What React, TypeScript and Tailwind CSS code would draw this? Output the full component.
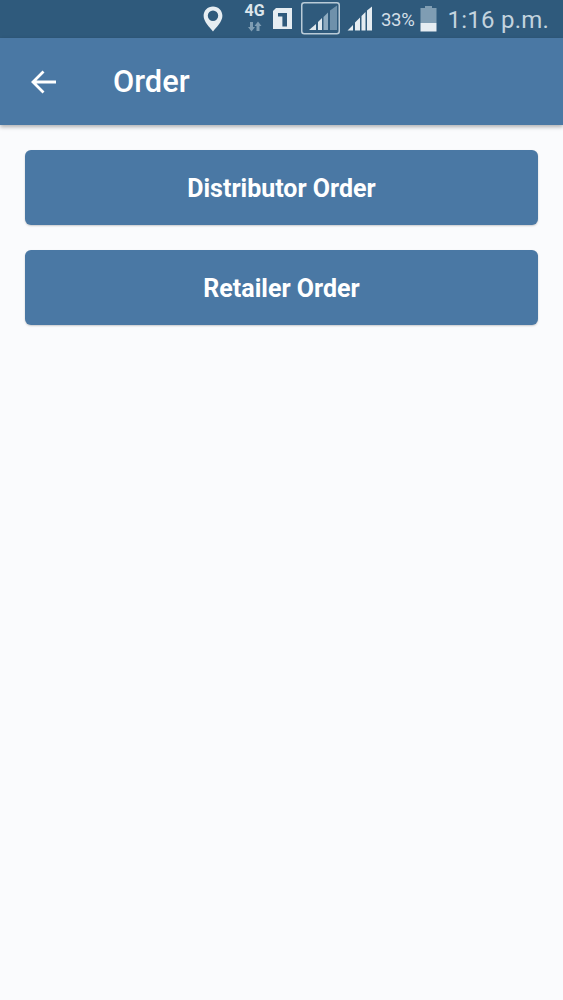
import React from "react";

function StatusIcons() {
  return (
    <>
      <svg width="20" height="26" viewBox="0 0 20 26" className="ml-[203px] mt-[6px] shrink-0">
        <path fillRule="evenodd" fill="#e6edf2" d="M10 0.5C4.6 0.5 0.6 4.6 0.6 9.8 0.6 15.5 6.6 21.5 10 25.5 13.4 21.5 19.4 15.5 19.4 9.8 19.4 4.6 15.4 0.5 10 0.5ZM10 4.6A5.200 5.200 0 1 1 10 15 5.200 5.200 0 1 1 10 4.600Z" />
      </svg>
      <div className="ml-[21px] mt-[3px] flex w-[21px] shrink-0 flex-col items-center">
        <span className="text-[16px] font-bold leading-[16px] text-[#dce6ec]">4G</span>
        <svg width="15" height="11" viewBox="0 0 15 11" className="mt-[2px]">
          <path fill="#7f9db3" d="M3 1h3v5h2l-3.500 4.500L1 6h2zM11 0.500 14.500 5H12.500v5h-3V5H7.500z" />
        </svg>
      </div>
      <svg width="21" height="23" viewBox="0 0 21 23" className="ml-[7px] mt-[7px] shrink-0">
        <path fill="#e6edf2" d="M4 1h16v21H1V4z" />
        <path fill="#2f5a7c" d="M6 6h4.500 4.500v13.500h-4.600V9.500H6z" />
      </svg>
      <svg width="39" height="33" viewBox="0 0 39 33" className="ml-[8px] mt-[2px] shrink-0">
        <rect x="0.75" y="0.75" width="37.5" height="31" rx="2.5" fill="none" stroke="#b9cbd8" strokeWidth="1.5" />
        <path fill="#dfe8ee" d="M8 28l7-6v6z" />
        <path fill="#dfe8ee" d="M17 28v-8l4-4v12z" />
        <path fill="#8fabc0" d="M22.500 28V15l4.500-4.500V28z" />
        <path fill="#6f91ab" d="M29 28V8.500l7-5V28z" />
      </svg>
      <svg width="25" height="26" viewBox="0 0 25 26" className="ml-[7px] mt-[6px] shrink-0">
        <path fill="#e6edf2" d="M0.500 24.500l5.500-5.500v5.500zM8 24.500v-8l5-5v13zM14.500 24.500V10l4-4v18.500zM20 24.500V4.500l5-4V24.500z" />
      </svg>
      <span className="ml-[9px] mt-[9px] shrink-0 text-[18.5px] leading-[22px] tracking-[-0.3px] text-[#d3dfe7]">33%</span>
      <svg width="17" height="26" viewBox="0 0 17 26" className="ml-[6px] mt-[6px] shrink-0">
        <path fill="#7f9db3" d="M5 0h7v2h4.500v15H0.500V2H5z" />
        <path fill="#e6edf2" d="M0.500 17h16v8.500H0.500z" />
      </svg>
      <span className="ml-[10px] mt-[5px] shrink-0 whitespace-nowrap text-[24px] leading-[30px] tracking-[0.25px] text-[#c3d3de]">1:16 p.m.</span>
    </>
  );
}

export default function App() {
  return (
    <div className="h-[1000px] w-[563px] overflow-hidden bg-[#fafbfd] font-['Roboto',sans-serif]">
      <div className="flex h-[38px] bg-[#2f5a7c]">
        <StatusIcons />
      </div>
      <header className="flex h-[87px] items-center bg-[#4a78a4] shadow-[0_2px_4px_rgba(0,0,0,0.3)]">
        <svg width="26" height="24" viewBox="0 0 26 24" className="ml-[31px] shrink-0">
          <path d="M25 12H2M12.500 1.500 2 12l10.500 10.500" fill="none" stroke="#ffffff" strokeWidth="2.800" />
        </svg>
        <h1 className="ml-[56px] pt-[2px] text-[30.8px] font-medium leading-none text-white">Order</h1>
      </header>
      <main className="flex flex-col gap-[25px] px-[25px] pt-[25px]">
        <button className="h-[75px] rounded-[6px] bg-[#4a78a4] pt-[2px] text-[25px] font-bold text-white shadow-[0_1px_2px_rgba(0,0,0,0.2)]">
          Distributor Order
        </button>
        <button className="h-[75px] rounded-[6px] bg-[#4a78a4] pt-[2px] text-[25px] font-bold text-white shadow-[0_1px_2px_rgba(0,0,0,0.2)]">
          Retailer Order
        </button>
      </main>
    </div>
  );
}
